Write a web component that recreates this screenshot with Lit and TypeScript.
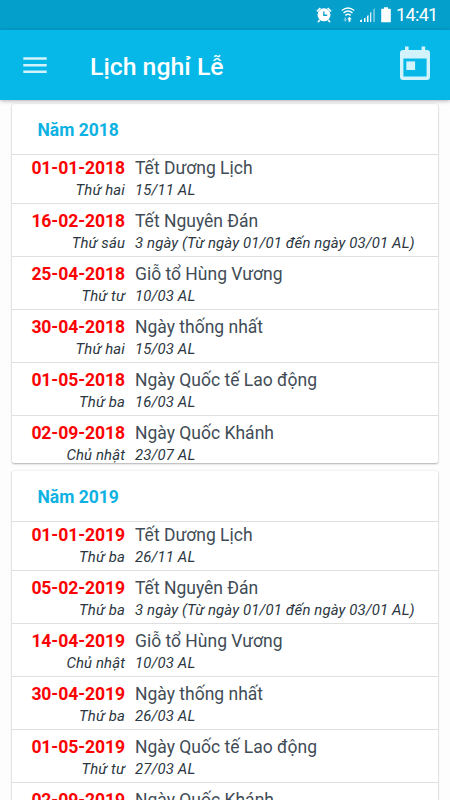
import { LitElement, html, css } from "lit";
import { customElement, property } from "lit/decorators.js";

interface Holiday {
  date: string;
  weekday: string;
  name: string;
  lunar: string;
}

interface YearGroup {
  year: number;
  holidays: Holiday[];
}

const day = (date: string, weekday: string, name: string, lunar: string): Holiday => ({
  date,
  weekday,
  name,
  lunar,
});

const YEARS: YearGroup[] = [
  {
    year: 2018,
    holidays: [
      day("01-01-2018", "Thứ hai", "Tết Dương Lịch", "15/11 AL"),
      day("16-02-2018", "Thứ sáu", "Tết Nguyên Đán", "3 ngày (Từ ngày 01/01 đến ngày 03/01 AL)"),
      day("25-04-2018", "Thứ tư", "Giỗ tổ Hùng Vương", "10/03 AL"),
      day("30-04-2018", "Thứ hai", "Ngày thống nhất", "15/03 AL"),
      day("01-05-2018", "Thứ ba", "Ngày Quốc tế Lao động", "16/03 AL"),
      day("02-09-2018", "Chủ nhật", "Ngày Quốc Khánh", "23/07 AL"),
    ],
  },
  {
    year: 2019,
    holidays: [
      day("01-01-2019", "Thứ ba", "Tết Dương Lịch", "26/11 AL"),
      day("05-02-2019", "Thứ ba", "Tết Nguyên Đán", "3 ngày (Từ ngày 01/01 đến ngày 03/01 AL)"),
      day("14-04-2019", "Chủ nhật", "Giỗ tổ Hùng Vương", "10/03 AL"),
      day("30-04-2019", "Thứ ba", "Ngày thống nhất", "26/03 AL"),
      day("01-05-2019", "Thứ tư", "Ngày Quốc tế Lao động", "27/03 AL"),
      day("02-09-2019", "Thứ hai", "Ngày Quốc Khánh", "04/08 AL"),
    ],
  },
];

@customElement("status-bar")
export class StatusBar extends LitElement {
  static styles = css`
    :host {
      display: flex;
      align-items: center;
      justify-content: flex-end;
      height: 30px;
      padding-right: 13px;
      box-sizing: border-box;
      background: #059fcb;
      color: #fff;
      font-size: 18px;
    }
    svg {
      display: block;
      fill: #fff;
    }
    .alarm { width: 16px; height: 16px; margin-right: 9px; }
    .wifi { width: 14px; height: 16px; margin-right: 5px; }
    .signal { width: 15px; height: 16px; margin-right: 6px; }
    .battery { width: 10px; height: 16px; margin-right: 5px; }
    .time { line-height: 32px; width: 41px; white-space: nowrap; letter-spacing: -0.65px; }
  `;

  render() {
    return html`
      <svg class="alarm" viewBox="0 0 16 16">
        <path fill-rule="evenodd" d="M8 1.3a6.5 6.5 0 1 1 0 13a6.5 6.5 0 0 1 0-13zM7.2 4.6v4.3h4V7.6H8.5v-3z" />
        <path d="M.4 3.8L3.8.6L5 1.4L1.2 5zM15.6 3.8L12.2.6L11 1.4L14.800 5zM3 12.500l1.400 1.200L2.500 15.600L1.300 14.900zM13 12.500l-1.400 1.200l1.900 1.900l1.200-.7z" />
      </svg>
      <svg class="wifi" viewBox="0 0 14 16">
        <g fill="none" stroke="#fff" stroke-width="1.4">
          <path d="M.8 3.500Q7-1.500 13.200 3.500" />
          <path d="M2.500 6Q7 2.200 11.500 6" />
          <path d="M4.300 8.400Q7 6.200 9.700 8.400" />
        </g>
        <path d="M8.500 9.800l2.300 2.400H9.400v2.600H7.500v-2.600H6.200z" />
        <path opacity=".5" d="M4.300 14.800l-2-2.300h1.200v-2h1.500v2h1.200z" />
      </svg>
      <svg class="signal" viewBox="0 0 15 16">
        <path d="M0 15v-1.500l2-1.200v2.700zM4 11.500l1.500-1V15H4zM7 9l1.500-1v7H7z" />
        <path d="M10 5.800l1.300-1V15H10z" opacity=".85" />
        <path d="M13.300 2.500L14.800 1v14h-1.500z" opacity=".5" />
      </svg>
      <svg class="battery" viewBox="0 0 10 16">
        <path d="M3 .2h4v1.600h2.300q.5 0 .5.500v12.500q0 .5-.5.500H.7q-.5 0-.5-.5V2.300q0-.5.5-.5H3z" />
      </svg>
      <span class="time">14:41</span>
    `;
  }
}

@customElement("top-bar")
export class TopBar extends LitElement {
  static styles = css`
    :host {
      display: flex;
      align-items: center;
      height: 70px;
      padding: 0 20px 0 23px;
      box-sizing: border-box;
      background: #05b8e7;
      color: #fff;
      box-shadow: 0 1px 4px rgba(0, 0, 0, 0.3);
      position: relative;
      z-index: 1;
    }
    svg {
      display: block;
      fill: #d2f3fc;
    }
    .menu { width: 24px; height: 18px; }
    .title {
      flex: 1;
      margin: 0;
      padding: 3px 0 0 43px;
      font-size: 24.8px;
      font-weight: 500;
      line-height: 67px;
      white-space: nowrap;
    }
    .calendar { width: 30px; height: 34px; margin-top: -4px; }
  `;

  render() {
    return html`
      <svg class="menu" viewBox="0 0 24 18">
        <path d="M.3 1.300h23.400v2.500H.3zM.3 8.100h23.400v2.500H.3zM.3 14.600h23.400v2.500H.3z" />
      </svg>
      <h1 class="title">Lịch nghỉ Lễ</h1>
      <svg class="calendar" viewBox="0 0 30 34">
        <path fill-rule="evenodd" d="M5 .5h3.600V4h13V.5h3.600V4H27q3 0 3 3v24q0 3-3 3H3q-3 0-3-3V7q0-3 3-3h2zM3.400 12.400v18.200h23.200v-18.200z" />
        <path d="M6.300 15.400h8.800v8.600H6.300z" />
      </svg>
    `;
  }
}

@customElement("year-card")
export class YearCard extends LitElement {
  @property({ attribute: false }) group!: YearGroup;

  static styles = css`
    :host {
      display: block;
      background: #fff;
      border-radius: 2px;
      box-shadow: 0 1px 2px rgba(0, 0, 0, 0.28), 0 0 2px rgba(0, 0, 0, 0.12);
      overflow: hidden;
    }
    .year {
      margin: 0;
      height: 50px;
      line-height: 52px;
      padding-left: 25.5px;
      font-size: 17.5px;
      font-weight: 700;
      color: #0eb2e2;
    }
    .row {
      display: grid;
      grid-template-columns: 113px 1fr;
      grid-template-rows: 22px 22px;
      column-gap: 10px;
      border-top: 1px solid #dfdfdf;
      padding: 6px 0 2px;
      white-space: nowrap;
    }
    .row.first { padding-top: 2px; }
    .row.last { grid-template-rows: 22px 19px; padding-bottom: 0; }
    .date, .weekday { text-align: right; }
    .date, .name { line-height: 22px; }
    .date { font-size: 17.6px; letter-spacing: -0.1px; font-weight: 700; color: #fb0303; }
    .name { font-size: 17.5px; color: #414c56; }
    .weekday, .lunar {
      line-height: 22px;
      font-size: 14.9px;
      letter-spacing: 0.13px;
      font-style: italic;
      color: #2b3641;
    }
  `;

  render() {
    const { year, holidays } = this.group;
    return html`
      <h2 class="year">Năm ${year}</h2>
      ${holidays.map(
        (h, i) => html`
          <div class="row ${i === 0 ? "first" : i === holidays.length - 1 ? "last" : ""}">
            <span class="date">${h.date}</span>
            <span class="name">${h.name}</span>
            <span class="weekday">${h.weekday}</span>
            <span class="lunar">${h.lunar}</span>
          </div>
        `,
      )}
    `;
  }
}

@customElement("app-root")
export class AppRoot extends LitElement {
  static styles = css`
    :host {
      display: flex;
      flex-direction: column;
      height: 800px;
      overflow: hidden;
      background: #fdfdfd;
      font-family: Roboto, "Noto Sans", sans-serif;
    }
    status-bar, top-bar { flex: none; }
    .list {
      flex: 1;
      min-height: 0;
      overflow: hidden;
      display: flex;
      flex-direction: column;
      gap: 8px;
      padding: 4px 12px 0;
    }
    year-card { flex: none; }
  `;

  render() {
    return html`
      <status-bar></status-bar>
      <top-bar></top-bar>
      <main class="list">
        ${YEARS.map((group) => html`<year-card .group=${group}></year-card>`)}
      </main>
    `;
  }
}
